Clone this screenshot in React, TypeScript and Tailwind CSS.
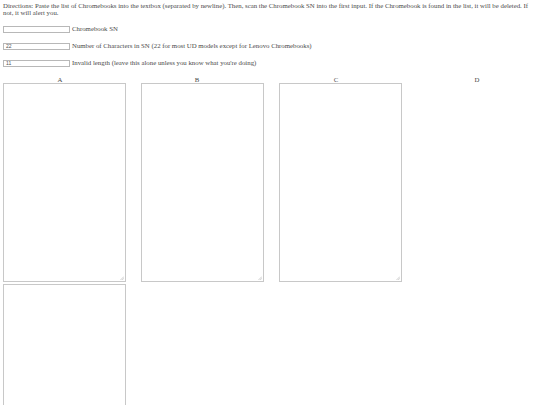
import React from "react";

function Handle() {
  return (
    <svg className="absolute right-[1px] bottom-[1px]" width="4" height="4" viewBox="0 0 4 4">
      <line x1="0.5" y1="4" x2="4" y2="0.5" stroke="#b0b0b0" strokeWidth="0.6" />
      <line x1="2.2" y1="4" x2="4" y2="2.2" stroke="#b0b0b0" strokeWidth="0.6" />
    </svg>
  );
}

function Box() {
  return (
    <div className="relative w-[123px] h-[199px] border border-[#c8c8c8] bg-white">
      <Handle />
    </div>
  );
}

function Field({ value, label }: { value: string; label: string }) {
  return (
    <div className="flex items-center h-[7px]">
      <div className="w-[67px] h-[7px] border border-[#b8b8b8] bg-white flex items-center pl-[2px] text-[5px] leading-[5px] text-[#555] [font-family:'Liberation_Sans',Arial,sans-serif]">
        {value}
      </div>
      <span className="ml-[2px] whitespace-nowrap">{label}</span>
    </div>
  );
}

export default function App() {
  return (
    <div className="bg-white text-[#4a4a4a] w-[540px] h-[405px] overflow-hidden px-[3px] pt-[3px] text-[6.8px] leading-[6.5px] [font-family:'Liberation_Serif','Times_New_Roman',serif]">
      <div className="w-[534px]">
        Directions: Paste the list of Chromebooks into the textbox (separated by newline). Then, scan the Chromebook SN into the first input. If the Chromebook is found in the list, it will be deleted. If not, it will alert you.
      </div>
      <div className="mt-[10px] flex flex-col gap-[10px]">
        <Field value="" label="Chromebook SN" />
        <Field value="22" label="Number of Characters in SN (22 for most UD models except for Lenovo Chromebooks)" />
        <Field value="11" label="Invalid length (leave this alone unless you know what you're doing)" />
      </div>
      <div className="mt-[10px] flex h-[6px] leading-[6px] pl-[52px]">
        <div className="w-[10px] text-center">A</div>
        <div className="w-[10px] text-center ml-[127px]">B</div>
        <div className="w-[10px] text-center ml-[129px]">C</div>
        <div className="w-[10px] text-center ml-[131px]">D</div>
      </div>
      <div className="flex flex-wrap gap-x-[15px] gap-y-[2px] w-[534px]">
        <Box />
        <Box />
        <Box />
        <Box />
      </div>
    </div>
  );
}
